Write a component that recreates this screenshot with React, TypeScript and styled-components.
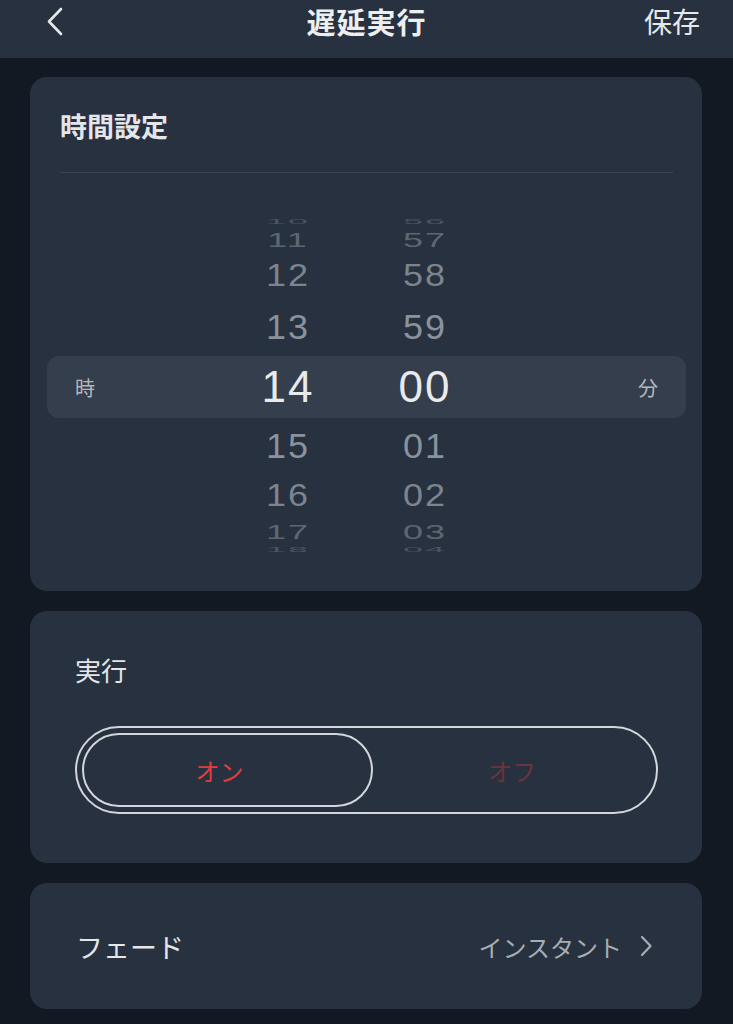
import React from "react";
import styled, { createGlobalStyle } from "styled-components";

const GlobalStyle = createGlobalStyle`
  html, body {
    margin: 0;
    padding: 0;
    background: #121923;
  }
  * { box-sizing: border-box; }
  body {
    font-family: "Noto Sans CJK JP", "Noto Sans", sans-serif;
    color: #e6e8ea;
  }
`;

const Page = styled.div`
  width: 733px;
  min-height: 1024px;
  background: #121923;
`;

const Header = styled.header`
  height: 58px;
  background: #27313f;
  display: grid;
  grid-template-columns: 1fr auto 1fr;
  align-items: start;
  padding: 0 33px;
`;

const HeaderRow = styled.div<{ $align: "start" | "center" | "end" }>`
  height: 42px;
  display: flex;
  align-items: center;
  padding-left: ${(p) => (p.$align === "start" ? 13 : 0)}px;
  justify-content: ${(p) => (p.$align === "start" ? "flex-start" : p.$align === "end" ? "flex-end" : "center")};
`;

const Title = styled.h1`
  margin: 0;
  font-size: 29px;
  font-weight: 700;
  line-height: 42px;
  color: #eceef0;
  letter-spacing: 1px;
`;

const SaveButton = styled.span`
  font-size: 28px;
  font-weight: 400;
  line-height: 42px;
  color: #e6e8ea;
`;

const Main = styled.main`
  display: flex;
  flex-direction: column;
  gap: 20px;
  padding: 19px 31px 0 30px;
`;

const Card = styled.section<{ $pad: string }>`
  background: #27313f;
  border-radius: 17px;
  padding: ${(p) => p.$pad};
`;

const CardTitle = styled.h2`
  margin: 0;
  font-size: 27px;
  font-weight: 700;
  line-height: 38px;
  color: #e4e6e9;
`;

const Divider = styled.div`
  height: 1px;
  background: #3b4451;
  margin-top: 27px;
`;

const Picker = styled.div`
  margin: 45px -13px 0;
  display: flex;
  flex-direction: column;
`;

const PickerRow = styled.div<{ $h: number; $selected?: boolean }>`
  height: ${(p) => p.$h}px;
  display: flex;
  align-items: center;
  border-radius: 12px;
  background: ${(p) => (p.$selected ? "#353e4c" : "transparent")};
`;

const UnitLeft = styled.div`
  width: 191px;
  padding-left: 28px;
  font-size: 20px;
  color: #b3b8be;
`;

const UnitRight = styled.div`
  flex: 1;
  text-align: right;
  padding-right: 28px;
  font-size: 20px;
  color: #b3b8be;
`;

const DigitCell = styled.div<{ $gap?: number }>`
  width: 100px;
  margin-left: ${(p) => p.$gap ?? 0}px;
  display: flex;
  justify-content: center;
  align-items: center;
`;

const Digits = styled.span<{ $size: number; $color: string; $scale: number }>`
  display: inline-block;
  font-family: "Liberation Sans", Arial, sans-serif;
  font-size: ${(p) => p.$size}px;
  line-height: 1;
  letter-spacing: 2px;
  color: ${(p) => p.$color};
  transform: scaleY(${(p) => p.$scale});
`;

const SectionLabel = styled.div`
  font-size: 26px;
  line-height: 36px;
  color: #e4e6e9;
`;

const Segmented = styled.div`
  margin-top: 38px;
  height: 88px;
  border: 2px solid #d3d6da;
  border-radius: 44px;
  padding: 5px;
  display: grid;
  grid-template-columns: 291px 1fr;
`;

const Segment = styled.div<{ $active?: boolean }>`
  display: flex;
  align-items: center;
  justify-content: center;
  border-radius: 40px;
  border: 2px solid ${(p) => (p.$active ? "#d3d6da" : "transparent")};
  padding-right: ${(p) => (p.$active ? 16 : 0)}px;
  font-size: 24px;
  color: ${(p) => (p.$active ? "#e53b3b" : "#6b343c")};
`;

const ListRow = styled.div`
  height: 126px;
  display: flex;
  align-items: center;
  justify-content: space-between;
  padding: 0 49px 0 46px;
`;

const RowLabel = styled.span`
  font-size: 27px;
  color: #e4e6e9;
`;

const RowValue = styled.span`
  display: flex;
  align-items: center;
  gap: 17px;
  font-size: 24px;
  color: #a8adb3;
`;

type WheelRow = {
  h: string;
  m: string;
  height: number;
  size: number;
  scale: number;
  color: string;
  selected?: boolean;
};

const rows: WheelRow[] = [
  { h: "10", m: "56", height: 8, size: 36, scale: 0.2, color: "#4a535e" },
  { h: "11", m: "57", height: 28, size: 36, scale: 0.55, color: "#5e6771" },
  { h: "12", m: "58", height: 44, size: 36, scale: 0.86, color: "#7c848e" },
  { h: "13", m: "59", height: 58, size: 36, scale: 0.97, color: "#8a929b" },
  { h: "14", m: "00", height: 62, size: 44, scale: 1, color: "#e8eaec", selected: true },
  { h: "15", m: "01", height: 56, size: 36, scale: 0.97, color: "#8a929b" },
  { h: "16", m: "02", height: 44, size: 36, scale: 0.86, color: "#7c848e" },
  { h: "17", m: "03", height: 28, size: 36, scale: 0.55, color: "#5e6771" },
  { h: "18", m: "04", height: 8, size: 36, scale: 0.2, color: "#4a535e" },
];

const BackIcon = () => (
  <svg width="18" height="30" viewBox="0 0 18 30" fill="none">
    <polyline points="15,3 3,15.5 15,28" stroke="#e6e8ea" strokeWidth="2.6" strokeLinecap="round" strokeLinejoin="round" />
  </svg>
);

const ChevronRight = () => (
  <svg width="14" height="22" viewBox="0 0 14 22" fill="none">
    <polyline points="3,2 11.5,11 3,20" stroke="#a8adb3" strokeWidth="2.2" strokeLinecap="round" strokeLinejoin="round" />
  </svg>
);

export default function App() {
  return (
    <Page>
      <GlobalStyle />
      <Header>
        <HeaderRow $align="start">
          <BackIcon />
        </HeaderRow>
        <HeaderRow $align="center">
          <Title>遅延実行</Title>
        </HeaderRow>
        <HeaderRow $align="end">
          <SaveButton>保存</SaveButton>
        </HeaderRow>
      </Header>
      <Main>
        <Card $pad="30px 29px 37px 30px">
          <CardTitle>時間設定</CardTitle>
          <Divider />
          <Picker>
            {rows.map((r) => (
              <PickerRow key={r.h} $h={r.height} $selected={r.selected}>
                <UnitLeft>{r.selected ? "時" : ""}</UnitLeft>
                <DigitCell>
                  <Digits $size={r.size} $color={r.color} $scale={r.scale}>
                    {r.h}
                  </Digits>
                </DigitCell>
                <DigitCell $gap={37}>
                  <Digits $size={r.size} $color={r.color} $scale={r.scale}>
                    {r.m}
                  </Digits>
                </DigitCell>
                <UnitRight>{r.selected ? "分" : ""}</UnitRight>
              </PickerRow>
            ))}
          </Picker>
        </Card>
        <Card $pad="41px 44px 49px 45px">
          <SectionLabel>実行</SectionLabel>
          <Segmented>
            <Segment $active>オン</Segment>
            <Segment>オフ</Segment>
          </Segmented>
        </Card>
        <Card $pad="0">
          <ListRow>
            <RowLabel>フェード</RowLabel>
            <RowValue>
              インスタント
              <ChevronRight />
            </RowValue>
          </ListRow>
        </Card>
      </Main>
    </Page>
  );
}
